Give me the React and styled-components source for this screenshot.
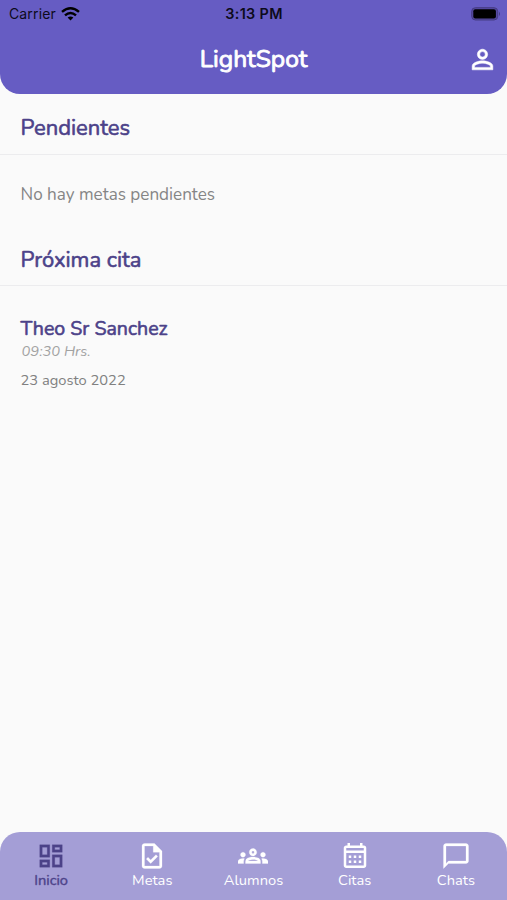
import React, { useState } from 'react';
import styled, { createGlobalStyle } from 'styled-components';
import {
    MdOutlineDashboard,
    MdOutlineTask,
    MdOutlineGroups,
    MdChatBubbleOutline,
    MdPersonOutline,
} from 'react-icons/md';

const GlobalStyle = createGlobalStyle`
    * {
        box-sizing: border-box;
    }

    body {
        margin: 0;
        background-color: #fafafa;
        font-family: Nunito, Lato, sans-serif;
    }

    h1, h2, h3, p {
        margin: 0;
    }
`;

const Screen = styled.div`
    display: flex;
    flex-direction: column;
    height: 100vh;
    overflow: hidden;
    background-color: #fafafa;
`;

const Header = styled.header`
    height: 93.5px;
    flex-shrink: 0;
    background-color: #665cc3;
    border-radius: 0 0 20px 20px;
`;

const StatusBar = styled.div`
    display: grid;
    grid-template-columns: 1fr auto 1fr;
    align-items: center;
    height: 27px;
    padding: 0 6px 0 9px;
    font-family: Inter, sans-serif;
    font-size: 14px;
    line-height: 27px;
    color: #0d0b1b;
`;

const Carrier = styled.div`
    display: flex;
    align-items: center;
    gap: 5.5px;
    letter-spacing: 0.14px;
`;

const Clock = styled.div`
    margin-left: -2px;
    font-weight: 600;
    font-size: 14.4px;
    letter-spacing: 0.35px;
`;

const BatteryIcon = styled.svg`
    justify-self: end;
`;

const TitleBar = styled.div`
    display: grid;
    grid-template-columns: 1fr auto 1fr;
    align-items: center;
    height: 64px;
    padding: 0 9px;
`;

const Title = styled.h1`
    grid-column: 2;
    font-size: 24.6px;
    font-weight: 400;
    line-height: 30px;
    color: #fff;
    -webkit-text-stroke: 0.9px #fff;
`;

const ProfileButton = styled.button`
    justify-self: end;
    display: flex;
    padding: 1px 0 0;
    border: 0;
    background: none;
    color: #fff;

    svg {
        stroke-width: 0.4px;
    }

    path[fill='none'] {
        stroke: none;
    }
`;

const Content = styled.main`
    flex: 1;
`;

const SectionTitle = styled.h2`
    height: ${({ $height }) => $height}px;
    padding: ${({ $top }) => $top}px 20.5px 0;
    border-bottom: 1px solid #ececee;
    font-size: 22px;
    font-weight: 400;
    line-height: 28px;
    color: #4c4289;
    -webkit-text-stroke: 0.6px #4c4289;
`;

const EmptyText = styled.p`
    height: 78px;
    padding: 28px 20.5px 0;
    font-size: 17.1px;
    line-height: 24px;
    color: #858585;
`;

const Appointment = styled.article`
    padding: 30px 20.5px 0;
`;

const PersonName = styled.h3`
    font-size: 19.6px;
    font-weight: 400;
    line-height: 25px;
    color: #4c4289;
    -webkit-text-stroke: 0.6px #4c4289;
`;

const Hour = styled.p`
    padding-left: 1px;
    font-size: 14.7px;
    font-style: italic;
    line-height: 20px;
    color: #a2a2a2;
`;

const DateText = styled.p`
    margin-top: 9.5px;
    font-size: 14.7px;
    line-height: 20px;
    color: #808080;
`;

const TabBar = styled.nav`
    display: grid;
    grid-template-columns: repeat(5, 1fr);
    height: 68.5px;
    padding-right: 1px;
    flex-shrink: 0;
    border-radius: 20px 20px 0 0;
    background-color: #a49ed6;
`;

const Tab = styled.button`
    display: flex;
    flex-direction: column;
    align-items: center;
    padding: 9.5px 0 0 1px;
    border: 0;
    background: none;
    font-family: inherit;
    font-size: 14.7px;
    line-height: 19px;
    color: ${({ $active }) => ($active ? '#4c4289' : '#fff')};
    -webkit-text-stroke: ${({ $active }) => ($active ? '0.4px' : '0')};

    svg {
        stroke-width: 0.2px;
    }

    path[fill='none'] {
        stroke: none;
    }
`;

const CalendarIcon = ({ size }) => (
    <svg width={size} height={size} viewBox="0 -0.5 24 24" fill="currentColor">
        <path d="M7 11H9V13H7V11M21 5V19C21 20.11 20.11 21 19 21H5C3.89 21 3 20.1 3 19V5C3 3.9 3.9 3 5 3H6V1H8V3H16V1H18V3H19A2 2 0 0 1 21 5M5 7H19V5H5V7M19 19V9H5V19H19M15 13V11H17V13H15M11 13V11H13V13H11M7 15H9V17H7V15M15 17V15H17V17H15M11 17V15H13V17H11Z" />
    </svg>
);

const tabs = [
    { label: 'Inicio', Icon: MdOutlineDashboard },
    { label: 'Metas', Icon: MdOutlineTask },
    { label: 'Alumnos', Icon: MdOutlineGroups },
    { label: 'Citas', Icon: CalendarIcon },
    { label: 'Chats', Icon: MdChatBubbleOutline },
];

const Wifi = () => (
    <svg width="19" height="14" viewBox="0 0 19 14" fill="none" stroke="#000" strokeWidth="2.5">
        <path d="M1 4.9Q9.5 -2.3 18 4.9" />
        <path d="M4 8.4Q9.5 3.7 15 8.4" />
        <path d="M6.6 10.6Q9.5 8.2 12.4 10.6L9.5 13.6Z" fill="#000" stroke="none" />
    </svg>
);

const Battery = () => (
    <BatteryIcon width="30" height="14" viewBox="0 0 30 14">
        <rect x="0.7" y="0.7" width="26" height="12.3" rx="3.7" fill="#5549a0" stroke="#453c83" strokeWidth="1" />
        <rect x="2.3" y="2.3" width="22.6" height="9.2" rx="2" fill="#000" />
        <path d="M28 4.8Q30 6.9 28 9Z" fill="#453c83" />
    </BatteryIcon>
);

const App = () => {

    const [activeTab, setActiveTab] = useState('Inicio');

    return(
        <Screen>
            <GlobalStyle />
            <Header>
                <StatusBar>
                    <Carrier>Carrier <Wifi /></Carrier>
                    <Clock>3:13 PM</Clock>
                    <Battery />
                </StatusBar>
                <TitleBar>
                    <Title>LightSpot</Title>
                    <ProfileButton aria-label="Perfil">
                        <MdPersonOutline size={31} />
                    </ProfileButton>
                </TitleBar>
            </Header>
            <Content>
                <SectionTitle $height={61} $top={20}>Pendientes</SectionTitle>
                <EmptyText>No hay metas pendientes</EmptyText>
                <SectionTitle $height={53} $top={13}>Próxima cita</SectionTitle>
                <Appointment>
                    <PersonName>Theo Sr Sanchez</PersonName>
                    <Hour>09:30 Hrs.</Hour>
                    <DateText>23 agosto 2022</DateText>
                </Appointment>
            </Content>
            <TabBar>
                {tabs.map(({ label, Icon }) => (
                    <Tab
                        key={label}
                        $active={activeTab === label}
                        onClick={() => setActiveTab(label)}
                    >
                        <Icon size={30} />
                        {label}
                    </Tab>
                ))}
            </TabBar>
        </Screen>
    )
}


export default App;
